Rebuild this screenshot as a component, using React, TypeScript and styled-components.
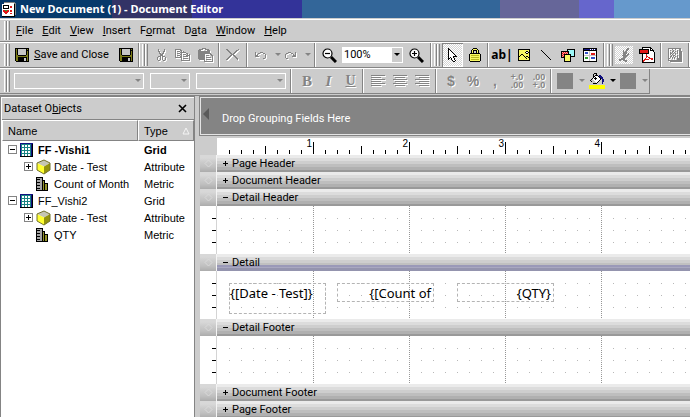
import React from "react";
import styled, { createGlobalStyle, css } from "styled-components";

const GlobalStyle = createGlobalStyle`
  * { box-sizing: border-box; }
  body { margin: 0; background: #ccc; }
  svg { flex: none; display: block; }
  button, select { font: inherit; color: inherit; margin: 0; padding: 0; border: 0; background: none; }
`;

/* ---------- icon drawing ---------- */

const palette: Record<string, string> = {
  k: "#000000", w: "#ffffff", g: "#848484", l: "#c6c6c6", o: "#7b7b18", y: "#f7f763",
  Y: "#ffff00", d: "#b8b820", r: "#e01818", R: "#ff9c9c", c: "#9cf7f7", n: "#101080",
  t: "#188484", b: "#3151c6", G: "#31a031", v: "#a5a5a5", m: "#94942a",
};

const Pixels = ({ rows, shadow }: { rows: string[]; shadow?: boolean }) => {
  const w = Math.max(...rows.map((r) => r.length));
  const extra = shadow ? 1 : 0;
  const cells = (d: number, color?: string) =>
    rows.flatMap((row, y) =>
      [...row].map((ch, x) =>
        palette[ch] ? <rect key={`${d}-${x}-${y}`} x={x + d} y={y + d} width="1" height="1" fill={color ?? palette[ch]} /> : null
      )
    );
  return (
    <svg width={w + extra} height={rows.length + extra} shapeRendering="crispEdges" aria-hidden="true">
      {shadow && cells(1, "#fff")}
      {cells(0)}
    </svg>
  );
};

const art = {
  app: [
    "  ggggggggggg ", "  wwwwwwwwwwgg", "wwwwwwwwwwwwkg", "wkkkkkkwwwwwkg", "wkwwwwkwrrwwkg", "wkwwwwkwrrwwkg",
    "wkkkkkkwwwwwkg", "wwwwwwwwwwwwkg", "wrrGGrrwrrwwkg", "wrrrrrrwrrwwkg", "wwrrrrwwwwwwkg", "wwwrrwwwrrwwkg", "wwwwwwwwwwwwkg", "wwwwwwwwwwwwk ", "kkkkkkkkkkkkk ",
  ],
  save: [
    "kkkkkkkkkkkkkk", "kokllllllllkok", "kokllllllllkkk", "kokllllllllkok", "kokllllllllkok", "kokllllllllkok", "kokllllllllkok",
    "kookkkkkkkkook", "kooooooooooook", "kookkkkkkkkkok", "kookkkkkkllkok", "kookkkkkkllkok", "kookkkkkkllkok", " kkkkkkkkkkkkk",
  ],
  cut: [
    "  g     g", "  g     g", "  gg   gg", "   g   g ", "   gg gg ", "    ggg  ", "    ggg  ", "  ggg ggg", " g  g g  g", " g  g g  g", " g  g g  g", "  gg   gg",
  ],
  copy: [
    "gggggg         ", "g    gg        ", "g ggg g g      ", "g    gggggg    ", "g ggg g    gg  ", "g    gg ggg g g", "g ggg g    gggg",
    "g    gg ggggg g", "ggggggg       g", "      g ggggg g", "      g       g", "      ggggggggg",
  ],
  paste: [
    "    gggg      ", " gggg  gggg   ", "ggg      ggg  ", "gggggggggggg  ", "gggggggggggg  ", "ggggggggggggg ", "ggggggg     gg",
    "ggggggg ggg  gg", "ggggggg       g", "ggggggg ggggg g", "ggggggg       g", " gggggg ggggg g", "      g       g", "      ggggggggg",
  ],
  remove: [
    "gg          g", " gg       gg", "  gg     gg ", "   gg   gg  ", "    gg gg   ", "     ggg    ", "    gg gg   ", "   gg   gg  ", "  gg     gg ", " gg       gg", "gg         g",
  ],
  undo: ["         ", "g    ggg    ", "g  gg   gg  ", "g g       g ", "ggg       g ", "gggg      g ", "          g ", "        gg  "],
  redo: ["            ", "   ggg    g ", " gg   gg  g ", "g       g g ", "g       ggg ", "g      gggg ", "g           ", " gg         "],
  cursor: [
    "k         ", "kk        ", "kwk       ", "kwwk      ", "kwwwk     ", "kwwwwk    ", "kwwwwwk   ", "kwwwwwwk  ", "kwwwwkkkk ", "kwkwwk    ", "kk kwwk   ", "k  kwwk   ", "    kwwk  ", "     kk   ",
  ],
  lock: [
    "    kkkk    ", "   kyyyyk   ", "  kykkkkyk  ", "  kyk  kyk  ", "  kyk  kyk  ", " kkkkkkkkkk ", "kyyyyyyyyyyk", "kyddddddddyk", "kyyyyyyyyyyk", "kyddddddddyk", "kyyyyyyyyyyk", "kyddddddddyk", "kyyyyyyyyyyk", " kkkkkkkkkk ",
  ],
  picture: [
    "kkkkkkkkkkkk", "kyyyyyyyyyyk", "kyyyyyyykkyk", "kyyyyyykwwkk", "kyyyyyyykkyk", "kyykkyyyyyyk", "kykyykyyyyyk", "kkyyyykykkyk", "kyyyyyykyykk", "kyyyyyyykyyk", "kyyyyyyyyyyk", "kkkkkkkkkkkk",
  ],
  shapes: [
    "      kkkkkkkk", "      kcccccck", "kkkkkkkkccccck", "kRrRrRrkccccck", "krRrRrRkccccck", "kRrkkkkkkkccck", "krRkyyyyykccck", "kRrkyyyyykkkkk", "kkkkyyyyyk    ", "   kyyyyyk    ", "   kyyyyyk    ", "   kyyyyyk    ", "   kkkkkkk    ",
  ],
  panel: [
    "kkkkkkkkkkkkkk", "knnnnnnwnwnwnk", "kkkkkkkkkkkkkk", "kwwwwwlwwwwwwk", "kwbbbwlwwwwwwk", "kwbbbwlwrrrrwk", "kwwwwwlwrrrrwk", "kllllllllllllk", "kwwwwwlwwwwwwk", "kwGGGwlwbbbbwk", "kwGGGwlwbbbbwk", "kwwwwwlwwwwwwk", "kwwwwwlwwwwwwk", "kkkkkkkkkkkkkk",
  ],
  pdf: [
    "   kkkkkkkkk    ", "   kwwwwwwwkk   ", "kkkkkkkkkkwkwk  ", "krrrrrrrrkwkkkk ", "krrrrrrrrkwwwwk ", "krrrrrrrrkwwwwwk", "kkkkkkkkkkwwwwwk", "   kwwwrwwwwwwwk", "   kwwwrwwwwwwwk", "   kwwwrrwwwwwwk", "   kwwwrwrrwwwwk", "   kwwrwwwrrrrwk", "   kwrrrrrwwrrwk", "   krrwwwwwwwwwk", "   krwwwwwwwwwwk", "   kkkkkkkkkkkkk",
  ],
  figure: [
    "        gg ", "       ggg ", "    g  gg  ", "    g gg   ", "    gggg   ", "    gggg g ", "    ggg gg ", "   gggggg  ", "    gggg   ", "    ggg    ", "  gggg     ", "gggggg     ", "gg  gggg   ", "      gg   ",
  ],
  hatch: [
    "ggggggggggggg ", "g   g  g   gg ", "g g  g   g gg ", "g   gg g g ggg", "g g g g  g ggg", "g gg g g g ggg", "g g g  g   ggg", "g  g gg  g ggg", "g gg g g g ggg", "g g g g  g ggg", "gg  g g  ggggg", "g        ggggg", "gggggggggggggg", "  gggggggggggg",
  ],
  bucket: [
    "     kkk       ", "    k  k       ", "    k kkk nn   ", "    kkwwwknnn  ", "    kwkwwwknnn ", "   kwkkkwwwknn ", "  klwwkwwwwk nn", " klllwwwwwk  nn", "  klllwwwk   nn", "   llllwk    n ", "    kkkk     n ",
    "               ", "YYYYYYYYYYYYYYYY", "YYYYYYYYYYYYYYYY", "YYYYYYYYYYYYYYYY", "YYYYYYYYYYYYYYYY",
  ],
  grid: [
    "nnnnnnnnnnnnn", "nttttttttttnk", "ntwwtwwtwwtnk", "ntwwtwwtwwtnk", "nttttttttttnk", "ntwwtwwtwwtnk", "ntwwtwwtwwtnk", "nttttttttttnk", "ntwwtwwtwwtnk", "ntwwtwwtwwtnk", "nttttttttttnk", "ntwwtwwtwwtnk", "ntwwtwwtwwtnk", "kkkkkkkkkkkkk",
  ],
  metric: [
    "kkkkkkk      ", "kvvvvvk      ", "kkkkvvk      ", "kvvvvvkkk    ", "kvvvvvkmk    ", "kkkkvvkmk    ", "kvvvvvkmkkkk ", "kvvvvvkmkmmk ", "kkkkvvkmkmmk ", "kvvvvvkmkmmk ", "kvvvvvkmkmmk ", "kkkkvvkmkmmk ", "kvvvvvkmkmmk ", "kkkkkkkkkkkk ",
  ],
};

const Cube = () => (
  <svg width="15" height="16" viewBox="0 0 15 16" aria-hidden="true">
    <path d="M1 4 8 1l6 3-6 3.5z" fill="#c6c6b5" />
    <path d="M1 4l7 3.500V15l-7-4z" fill="#ffff31" />
    <path d="M14 4 8 7.500V15l6-4z" fill="#94940c" />
    <path d="M1 4 8 1l6 3v7l-6 4-7-4z" fill="none" stroke="#73732a" strokeWidth="1" />
  </svg>
);

const Magnifier = ({ plus }: { plus?: boolean }) => (
  <svg width="15" height="15" viewBox="0 0 15 15" aria-hidden="true">
    <circle cx="5.5" cy="5.5" r="4.5" fill="#fff" stroke="#000" strokeWidth="1.2" />
    <path d={plus ? "M3 5.5h5M5.5 3v5" : "M3 5.5h5"} stroke="#000" strokeWidth="1.2" />
    <path d="M9 9l5 5" stroke="#000" strokeWidth="3" />
  </svg>
);

const Caret = ({ color = "#000" }: { color?: string }) => (
  <svg width="6" height="4" viewBox="0 0 6 4" aria-hidden="true">
    <path d="M0 0h6L3 3z" fill={color} />
  </svg>
);

const LineIcon = () => (
  <svg width="12" height="12" aria-hidden="true"><path d="M1 1l10 10" stroke="#000" strokeWidth="1" /></svg>
);

const AlignIcon = ({ side }: { side: "left" | "center" | "right" }) => (
  <svg width="15" height="13" shapeRendering="crispEdges" aria-hidden="true">
    {[0, 1, 2, 3, 4, 5].map((i) => {
      const w = i % 2 ? 10 : 14;
      const x = side === "left" ? 0 : side === "center" ? (14 - w) / 2 : 14 - w;
      return (
        <g key={i}>
          <rect x={x + 1} y={i * 2 + 1} width={w} height="1" fill="#fff" />
          <rect x={x} y={i * 2} width={w} height="1" fill="#848484" />
        </g>
      );
    })}
  </svg>
);

/* ---------- window chrome ---------- */

const Window = styled.div`
  height: 100vh;
  overflow: hidden;
  display: flex;
  flex-direction: column;
  background: #ccc;
  color: #000;
  font: 11px/14px Roboto, sans-serif;
`;

const TitleBar = styled.header`
  flex: none;
  display: flex;
  align-items: center;
  gap: 4px;
  height: 19px;
  padding-left: 2px;
  border-bottom: 1px solid #ccc;
  background: linear-gradient(90deg, #06396b 112px, #333366 112px 192px, #333399 192px 302px,
    #336699 302px 500px, #666699 500px 579px, #6666cc 579px 614px, #6699cc 614px);
`;

const Title = styled.h1`
  margin: 0;
  color: #fff;
  font: bold 11px/18px "Noto Sans", sans-serif;
  white-space: nowrap;
`;

const Bar = styled.div<{ $h: number }>`
  flex: none;
  display: flex;
  align-items: center;
  height: ${(p) => p.$h}px;
  padding-left: 4px;
  border-top: 1px solid #fff;
  border-bottom: 1px solid #848484;
`;

const Grip = styled.span<{ $spaced?: boolean }>`
  flex: none;
  align-self: stretch;
  width: 6px;
  margin: ${(p) => (p.$spaced ? "1px 2px" : "1px 0")};
  background: linear-gradient(90deg, #fff 1px, #ccc 1px 2px, #848484 2px 3px, #fff 3px 4px, #ccc 4px 5px, #848484 5px);
`;

const Divider = styled.span`
  flex: none;
  align-self: stretch;
  width: 2px;
  background: linear-gradient(90deg, #848484 1px, #fff 1px);
`;

const Menu = styled.nav`
  display: flex;
  gap: 9px;
  padding-left: 6px;
`;

const MenuItem = styled.button`
  line-height: 16px;
`;

const Tool = styled.button<{ $w: number; $pressed?: boolean; $dither?: boolean; $off?: boolean; $kind?: "bold" | "italic" | "under" | "sign" | "tiny" }>`
  flex: none;
  display: flex;
  align-items: center;
  justify-content: center;
  align-self: stretch;
  width: ${(p) => p.$w}px;
  white-space: nowrap;
  ${(p) => p.$off && css`color: #848484; text-shadow: 1px 1px #fff;`}
  ${(p) => (p.$pressed || p.$dither) && css`background: repeating-conic-gradient(#fff 0 25%, #d4d4d4 0 50%) 0 0 / 2px 2px;`}
  ${(p) => p.$pressed && css`box-shadow: inset 1px 1px #848484, inset -1px -1px #fff;`}
  ${(p) => p.$dither && css`margin: 3px 0;`}
  ${(p) => p.$kind === "bold" && css`font: bold 15px/16px "Liberation Serif", serif;`}
  ${(p) => p.$kind === "italic" && css`font: italic bold 15px/16px "Liberation Serif", serif;`}
  ${(p) => p.$kind === "under" && css`font: bold 14px/16px "Liberation Serif", serif; text-decoration: underline;`}
  ${(p) => p.$kind === "sign" && css`font: bold 14px/16px "Liberation Sans", sans-serif;`}
  ${(p) => p.$kind === "tiny" && css`font: bold 9px/8px "Liberation Sans", sans-serif; white-space: pre;`}
`;

const SaveTool = styled(Tool)`
  justify-content: flex-start;
  gap: 5px;
  padding-left: 5px;
`;

const TextTool = styled(Tool)`
  font: bold 12px/16px "Noto Sans", sans-serif;
`;

const Spacer = styled.span<{ $w: number }>`
  flex: none;
  width: ${(p) => p.$w}px;
`;

const Combo = styled.label<{ $w: number; $off?: boolean }>`
  flex: none;
  display: grid;
  grid-template-columns: 1fr 11px;
  align-items: center;
  justify-items: center;
  width: ${(p) => p.$w}px;
  height: 16px;
  background: ${(p) => (p.$off ? "#ccc" : "#fff")};
  border: 1px solid #fff;
  & > select {
    grid-area: 1 / 1 / 2 / 3;
    width: 100%;
    height: 14px;
    padding-left: 1px;
    appearance: none;
    outline: none;
    line-height: 14px;
  }
  & > span {
    grid-area: 1 / 2 / 2 / 3;
    display: grid;
    place-items: center;
    width: 10px;
    height: 14px;
    background: #ccc;
    pointer-events: none;
  }
`;

const Swatch = styled.span`
  width: 16px;
  height: 16px;
  background: #848484;
`;

const FormatRow = styled.div`
  flex: none;
  display: flex;
  height: 28px;
  border-top: 1px solid #fff;
  border-bottom: 1px solid #848484;
`;

const FormatBar = styled.div`
  flex: none;
  display: flex;
  align-items: center;
  height: 25px;
  padding-left: 4px;
  border-right: 1px solid #848484;
  border-bottom: 1px solid #848484;
`;

/* ---------- dataset panel ---------- */

const Workspace = styled.main`
  flex: 1;
  min-height: 0;
  display: grid;
  grid-template-columns: 195px minmax(0, 1fr);
  column-gap: 5px;
  background: #ccc;
`;

const Panel = styled.aside`
  display: flex;
  flex-direction: column;
  border: 1px solid #848484;
  border-bottom: 0;
  background: #fff;
  padding: 1px 0 0 1px;
`;

const PanelHead = styled.div`
  flex: none;
  display: flex;
  align-items: center;
  justify-content: space-between;
  height: 22px;
  padding: 0 7px 0 2px;
  background: #ccc;
  border-bottom: 1px solid #848484;
`;

const PanelTitle = styled.h2`
  margin: 0;
  font: 11px/16px Roboto, sans-serif;
`;

const CloseButton = styled.button`
  display: grid;
  place-items: center;
  width: 9px;
  height: 14px;
`;

const Tree = styled.table`
  width: 100%;
  table-layout: fixed;
  border-collapse: separate;
  border-spacing: 0;
  font-family: "Liberation Sans", sans-serif;
`;

const HeadCell = styled.th<{ $w?: number }>`
  width: ${(p) => (p.$w ? `${p.$w}px` : "auto")};
  height: 21px;
  padding: 0 3px 0 5px;
  background: #ccc;
  border-right: 1px solid #848484;
  border-bottom: 1px solid #848484;
  border-top: 1px solid #fff;
  border-left: 1px solid #fff;
  font-weight: normal;
  text-align: left;
  & > span { display: flex; justify-content: space-between; align-items: center; }
`;

const Cell = styled.td<{ $bold?: boolean }>`
  height: 17px;
  padding: 0 0 0 6px;
  font-weight: ${(p) => (p.$bold ? "bold" : "normal")};
  white-space: nowrap;
`;

const Node = styled.span<{ $level: number }>`
  display: grid;
  grid-template-columns: 9px 15px auto;
  column-gap: 3px;
  align-items: center;
  justify-content: start;
  height: 17px;
  padding-left: ${(p) => p.$level * 16}px;
`;

const Expander = styled.button<{ $plus: boolean }>`
  width: 9px;
  height: 9px;
  border: 1px solid #848484;
  background:
    linear-gradient(#000, #000) 1px 3px / 5px 1px no-repeat,
    linear-gradient(#000, #000) 3px 1px / 1px ${(p) => (p.$plus ? 5 : 0)}px no-repeat;
`;

/* ---------- design surface ---------- */

const Designer = styled.section`
  min-width: 0;
  display: flex;
  flex-direction: column;
`;

const GroupZone = styled.div`
  flex: none;
  display: flex;
  align-items: center;
  gap: 13px;
  height: 38px;
  margin: 1px 0 3px;
  padding: 6px 0 0 2px;
  background: #848484;
  border: 1px solid #e4e4e4;
  border-right: 0;
  outline: 1px solid #848484;
  color: #fff;
  & > svg { align-self: flex-start; margin-top: 4px; }
`;

const Ruler = styled.div`
  flex: none;
  height: 17px;
  margin-left: 17px;
  padding: 0 0 1px 1px;
  background: #fff;
`;

const Inches = styled.div`
  display: flex;
  height: 16px;
  font: 10px/11px "Liberation Sans", sans-serif;
  background:
    linear-gradient(90deg, transparent 11px, #000 11px) 0 100% / 12px 4px repeat-x,
    linear-gradient(90deg, transparent 47px, #000 47px) 0 100% / 48px 8px repeat-x,
    linear-gradient(90deg, transparent 95px, #000 95px) 0 100% / 96px 12px repeat-x;
  & > span { flex: none; width: 96px; padding-right: 2px; text-align: right; }
`;

const BandHead = styled.div`
  flex: none;
  display: grid;
  grid-template-columns: 16px minmax(0, 1fr);
  column-gap: 1px;
  height: 17px;
  background: #f4f4f4;
`;

const BandHandle = styled.span`
  display: grid;
  place-items: center;
  background: linear-gradient(#d8d8d8 3px, #ccc 7px, #c0c0c0 12px, #acacac);
`;

const BandToggle = styled.button<{ $active?: boolean }>`
  display: flex;
  align-items: center;
  gap: 4px;
  padding-left: 6px;
  line-height: 16px;
  text-align: left;
  background: ${(p) =>
    p.$active
      ? "linear-gradient(#ebebeb 3px, #dcdcdc 3px 6px, #cecece 6px 9px, #c0c0c0 9px 11px, #9a99b8 11px 13px, #a9a8c0 13px 14px, #9494ae 14px)"
      : "linear-gradient(#ebebeb 3px, #dcdcdc 3px 6px, #cecece 6px 9px, #bebebe 9px 12px, #b0b0b0 12px 15px, #999 15px)"};
`;

const BandBody = styled.div`
  flex: none;
  display: grid;
  grid-template-columns: 17px minmax(0, 1fr);
  height: 48px;
  background: #fff;
`;

const Gutter = styled.div`
  border-right: 1px solid #d4d4d4;
  padding: 12px 0 0 12px;
  background: linear-gradient(#000 1px, transparent 1px) 0 0 / 100% 12px content-box;
`;

const Surface = styled.div`
  position: relative;
  overflow: hidden;
  padding-left: 12px;
  background: conic-gradient(from 270deg at 1px 1px, #949494 90deg, transparent 0) 84px 0 / 96px 2px content-box;
`;

const Dots = styled.div`
  height: 100%;
  padding-top: 12px;
  background: conic-gradient(from 270deg at 1px 1px, #b8b8b8 90deg, transparent 0) 0 0 / 12px 12px content-box;
`;

const Field = styled.div<{ $left: number; $h: number; $right?: boolean }>`
  position: absolute;
  left: ${(p) => p.$left}px;
  top: 12px;
  width: 97px;
  height: ${(p) => p.$h}px;
  padding: 1px 2px 0 0;
  border: 1px dashed #b4b4b4;
  text-align: ${(p) => (p.$right ? "right" : "left")};
  font: 13px/16px "Noto Sans", sans-serif;
  white-space: nowrap;
`;

/* ---------- content ---------- */

const menus: [string, string, string][] = [
  ["", "F", "ile"], ["", "E", "dit"], ["", "V", "iew"], ["", "I", "nsert"],
  ["F", "o", "rmat"], ["D", "a", "ta"], ["", "W", "indow"], ["", "H", "elp"],
];

type Item = { name: string; type: string; icon: "grid" | "cube" | "metric"; level: number; plus?: boolean; bold?: boolean };
const items: Item[] = [
  { name: "FF -Vishi1", type: "Grid", icon: "grid", level: 0, plus: false, bold: true },
  { name: "Date - Test", type: "Attribute", icon: "cube", level: 1, plus: true },
  { name: "Count of Month", type: "Metric", icon: "metric", level: 1 },
  { name: "FF_Vishi2", type: "Grid", icon: "grid", level: 0, plus: false },
  { name: "Date - Test", type: "Attribute", icon: "cube", level: 1, plus: true },
  { name: "QTY", type: "Metric", icon: "metric", level: 1 },
];

const Band = ({ name, open, active, children }: { name: string; open?: boolean; active?: boolean; children?: React.ReactNode }) => (
  <>
    <BandHead>
      <BandHandle>
        <svg width="9" height="9" aria-hidden="true"><path d="M1 4.5 4.5 1 8 4.5 4.5 8z" fill="none" stroke="#dadada" /></svg>
      </BandHandle>
      <BandToggle $active={active} aria-expanded={!!open}>
        <svg width="5" height="5" shapeRendering="crispEdges" aria-hidden="true">
          <path d={open ? "M0 2h5v1H0z" : "M0 2h5v1H0zM2 0h1v5H2z"} />
        </svg>
        {name}
      </BandToggle>
    </BandHead>
    {open && (
      <BandBody>
        <Gutter />
        <Surface><Dots />{children}</Surface>
      </BandBody>
    )}
  </>
);

const FormatCombo = ({ w, label }: { w: number; label: string }) => (
  <Combo $w={w} $off>
    <select aria-label={label} disabled />
    <span><Caret color="#848484" /></span>
  </Combo>
);

export default function App() {
  return (
    <Window>
      <GlobalStyle />
      <TitleBar>
        <Pixels rows={art.app} />
        <Title>New Document (1) - Document Editor</Title>
      </TitleBar>

      <Bar $h={23}>
        <Grip />
        <Menu>
          {menus.map(([a, u, b]) => (
            <MenuItem key={u + b}>{a}<u>{u}</u>{b}</MenuItem>
          ))}
        </Menu>
      </Bar>

      <Bar $h={26} role="toolbar">
        <Grip />
        <SaveTool $w={103}><Pixels rows={art.save} /><span><u>S</u>ave and Close</span></SaveTool>
        <Tool $w={25} aria-label="Save"><Pixels rows={art.save} /></Tool>
        <Divider />
        <Grip $spaced />
        <Tool $w={22} aria-label="Cut"><Pixels rows={art.cut} shadow /></Tool>
        <Tool $w={22} aria-label="Copy"><Pixels rows={art.copy} shadow /></Tool>
        <Tool $w={24} aria-label="Paste"><Pixels rows={art.paste} shadow /></Tool>
        <Divider />
        <Tool $w={26} aria-label="Delete"><Pixels rows={art.remove} shadow /></Tool>
        <Divider />
        <Tool $w={26} aria-label="Undo"><Pixels rows={art.undo} shadow /></Tool>
        <Tool $w={7} aria-label="Undo history"><Caret color="#848484" /></Tool>
        <Tool $w={20} aria-label="Redo"><Pixels rows={art.redo} shadow /></Tool>
        <Tool $w={13} aria-label="Redo history"><Caret color="#848484" /></Tool>
        <Divider />
        <Tool $w={26} aria-label="Zoom out"><Magnifier /></Tool>
        <Combo $w={61}>
          <select aria-label="Zoom"><option>100%</option></select>
          <span><Caret /></span>
        </Combo>
        <Tool $w={27} aria-label="Zoom in"><Magnifier plus /></Tool>
        <Divider />
        <Grip $spaced />
        <Tool $w={21} $pressed aria-label="Select"><Pixels rows={art.cursor} /></Tool>
        <Tool $w={24} aria-label="Lock"><Pixels rows={art.lock} /></Tool>
        <Divider />
        <TextTool $w={26}>ab|</TextTool>
        <Tool $w={18} aria-label="Image"><Pixels rows={art.picture} /></Tool>
        <Tool $w={26} aria-label="Line"><LineIcon /></Tool>
        <Tool $w={18} aria-label="Shape"><Pixels rows={art.shapes} /></Tool>
        <Tool $w={26} aria-label="Panel"><Pixels rows={art.panel} /></Tool>
        <Divider />
        <Grip $spaced />
        <Tool $w={18} $dither aria-label="Run"><Pixels rows={art.figure} /></Tool>
        <Tool $w={27} aria-label="PDF"><Pixels rows={art.pdf} /></Tool>
        <Divider />
        <Tool $w={26} aria-label="Preview"><Pixels rows={art.hatch} shadow /></Tool>
        <Divider />
      </Bar>

      <FormatRow>
        <FormatBar role="toolbar">
          <Grip />
          <Spacer $w={4} />
          <FormatCombo w={130} label="Font" />
          <Spacer $w={6} />
          <FormatCombo w={40} label="Size" />
          <Spacer $w={6} />
          <FormatCombo w={90} label="Number format" />
          <Spacer $w={4} />
          <Divider />
          <Spacer $w={4} />
          <Tool $w={22} $off $kind="bold">B</Tool>
          <Tool $w={21} $off $kind="italic">I</Tool>
          <Tool $w={23} $off $kind="under">U</Tool>
          <Divider />
          <Spacer $w={3} />
          <Tool $w={22} aria-label="Align left"><AlignIcon side="left" /></Tool>
          <Tool $w={22} aria-label="Align center"><AlignIcon side="center" /></Tool>
          <Tool $w={22} aria-label="Align right"><AlignIcon side="right" /></Tool>
          <Spacer $w={2} />
          <Divider />
          <Spacer $w={3} />
          <Tool $w={22} $off $kind="sign">$</Tool>
          <Tool $w={22} $off $kind="sign">%</Tool>
          <Tool $w={22} $off $kind="sign">,</Tool>
          <Tool $w={22} $off $kind="tiny">{"+.0\n.00"}</Tool>
          <Tool $w={22} $off $kind="tiny">{".00\n+.0"}</Tool>
          <Divider />
          <Tool $w={26} aria-label="Text color"><Swatch /></Tool>
          <Tool $w={7} aria-label="Text colors"><Caret color="#848484" /></Tool>
          <Tool $w={24} aria-label="Fill color"><Pixels rows={art.bucket} /></Tool>
          <Tool $w={7} aria-label="Fill colors"><Caret /></Tool>
          <Tool $w={24} aria-label="Line color"><Swatch /></Tool>
          <Tool $w={9} aria-label="Line colors"><Caret color="#848484" /></Tool>
        </FormatBar>
      </FormatRow>

      <Workspace>
        <Panel>
          <PanelHead>
            <PanelTitle>Dataset O<u>b</u>jects</PanelTitle>
            <CloseButton aria-label="Close">
              <svg width="9" height="9" aria-hidden="true"><path d="M1 1l7 7M8 1 1 8" stroke="#000" strokeWidth="1.6" /></svg>
            </CloseButton>
          </PanelHead>
          <Tree>
            <thead>
              <tr>
                <HeadCell $w={136}>Name</HeadCell>
                <HeadCell>
                  <span>Type
                    <svg width="8" height="8" aria-hidden="true"><path d="M4 1 1 7h6z" fill="#ccc" stroke="#f4f4f4" /></svg>
                  </span>
                </HeadCell>
              </tr>
            </thead>
            <tbody>
              {items.map((it, i) => (
                <tr key={i}>
                  <Cell $bold={it.bold}>
                    <Node $level={it.level}>
                      {it.plus === undefined ? <i /> : <Expander $plus={it.plus} aria-label={`Toggle ${it.name}`} />}
                      {it.icon === "cube" ? <Cube /> : <Pixels rows={art[it.icon]} />}
                      {it.name}
                    </Node>
                  </Cell>
                  <Cell $bold={it.bold}>{it.type}</Cell>
                </tr>
              ))}
            </tbody>
          </Tree>
        </Panel>

        <Designer>
          <GroupZone>
            <svg width="6" height="12" aria-hidden="true"><path d="M6 0v12L0 6z" fill="#5a5a5a" /></svg>
            Drop Grouping Fields Here
          </GroupZone>
          <Ruler>
            <Inches>{[1, 2, 3, 4].map((n) => <span key={n}>{n}</span>)}</Inches>
          </Ruler>
          <Band name="Page Header" />
          <Band name="Document Header" />
          <Band name="Detail Header" open />
          <Band name="Detail" open active>
            <Field $left={12} $h={31}>{"{[Date - Test]}"}</Field>
            <Field $left={120} $h={19} $right>{"{[Count of"}</Field>
            <Field $left={240} $h={19} $right>{"{QTY}"}</Field>
          </Band>
          <Band name="Detail Footer" open />
          <Band name="Document Footer" />
          <Band name="Page Footer" />
        </Designer>
      </Workspace>
    </Window>
  );
}
